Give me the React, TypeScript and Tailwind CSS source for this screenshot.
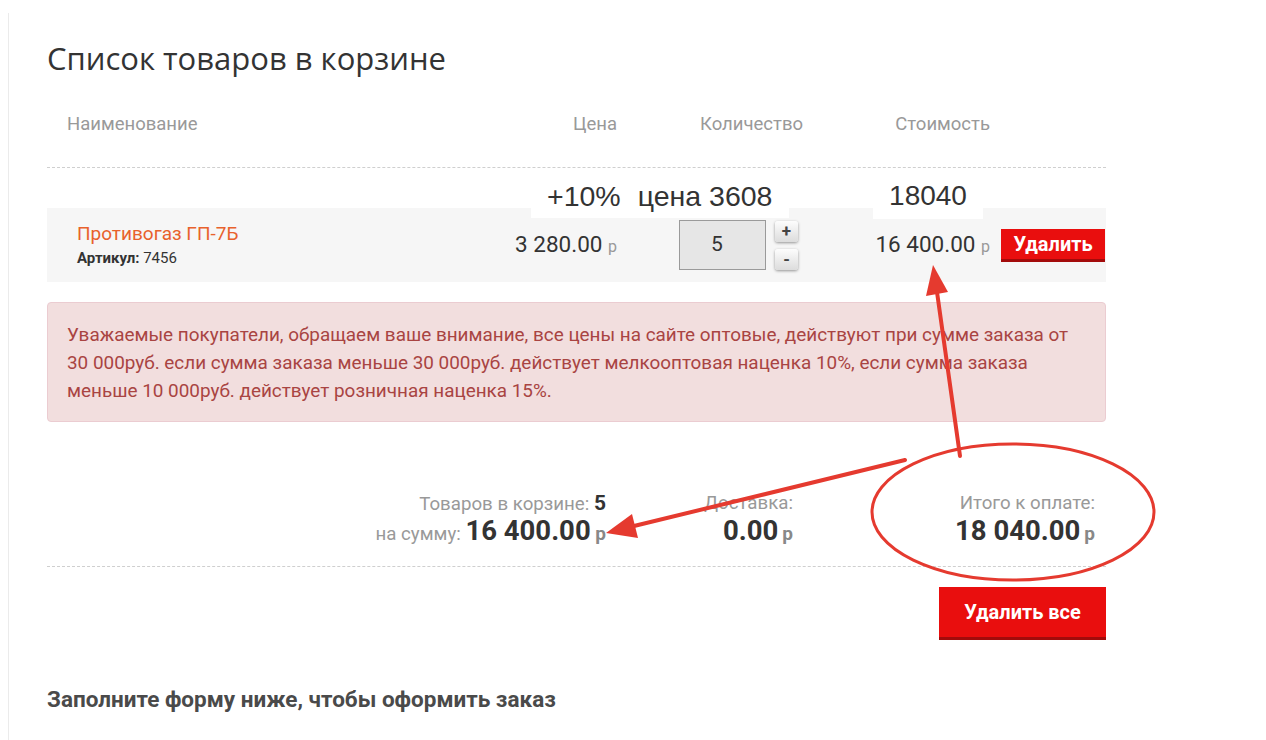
const roboto = { fontFamily: "Roboto, 'Liberation Sans', sans-serif" };

export default function App() {
  return (
    <div className="relative h-[740px] w-full overflow-hidden bg-white pl-2 pt-[13px]" style={roboto}>
      <div className="min-h-[760px] border-l border-[#ebebeb] pl-[38px]">
        <div className="w-[1059px] pt-[27px]">
          {/* Title */}
          <h1
            className="text-[31px] leading-[36px] text-[#333]"
            style={{ fontFamily: "'Open Sans', 'Noto Sans', sans-serif" }}
          >
            Список товаров в корзине
          </h1>

          {/* Table header */}
          <div className="mt-[36px] flex border-b border-dashed border-[#cfcfcf] pb-[31px] text-[18.5px] leading-[24px] text-[#999]">
            <div className="flex-1 pl-[20px]">Наименование</div>
            <div className="w-[160px] text-right">Цена</div>
            <div className="ml-[62px] w-[119px] pl-[21px]">Количество</div>
            <div className="w-[192px] text-right">Стоимость</div>
            <div className="ml-[11px] w-[104px]" />
            <div className="w-px" />
          </div>

          {/* Product row */}
          <div className="mt-[40px] flex h-[74px] items-center bg-[#f6f6f6]">
            <div className="flex-1 pl-[30px]">
              <div className="text-[19px] leading-[22px] text-[#e8612c]">Противогаз ГП-7Б</div>
              <div className="mt-[4px] text-[15px] leading-[18px] text-[#333]">
                <span className="font-bold">Артикул:</span> 7456
              </div>
            </div>
            <div className="w-[160px] text-right text-[22.5px] leading-[26px] text-[#333]">
              3 280.00 <span className="text-[16px] text-[#999]">р</span>
            </div>
            <div className="ml-[62px] flex w-[119px] items-center">
              <div className="flex h-[50px] w-[87px] items-center justify-center border border-[#9a9a9a] bg-[#e6e6e6] pr-[11px] text-[21px] text-[#333]">
                5
              </div>
              <div className="ml-[9px] flex flex-col gap-[7px]">
                <button className="flex h-[21px] w-[23px] items-center justify-center rounded-[3px] bg-gradient-to-b from-[#fdfdfd] to-[#dcdcdc] text-[17px] font-bold leading-none text-[#444] shadow-[0_1px_3px_rgba(0,0,0,0.4)]">
                  +
                </button>
                <button className="flex h-[21px] w-[23px] items-center justify-center rounded-[3px] bg-gradient-to-b from-[#fdfdfd] to-[#dcdcdc] text-[17px] font-bold leading-none text-[#444] shadow-[0_1px_3px_rgba(0,0,0,0.4)]">
                  -
                </button>
              </div>
            </div>
            <div className="w-[192px] text-right text-[22.5px] leading-[26px] text-[#333]">
              16 400.00 <span className="text-[16px] text-[#999]">р</span>
            </div>
            <button className="ml-[11px] h-[33px] w-[104px] border-b-[3px] border-[#a30b0b] bg-[#e90e0e] text-[20px] font-bold leading-none text-white">
              Удалить
            </button>
            <div className="w-px" />
          </div>

          {/* Notice */}
          <div className="mt-[20px] rounded-[4px] border border-[#ebccd1] bg-[#f2dede] pl-[19px] pr-[10px] pt-[18px] pb-[16px] text-[18.9px] leading-[28px] text-[#a94442]">
            Уважаемые покупатели, обращаем ваше внимание, все цены на сайте оптовые, действуют при сумме заказа от
            <br />
            30 000руб. если сумма заказа меньше 30 000руб. действует мелкооптовая наценка 10%, если сумма заказа
            <br />
            меньше 10 000руб. действует розничная наценка 15%.
          </div>

          {/* Totals */}
          <div className="mt-[68px] flex justify-end border-b border-dashed border-[#cfcfcf] pb-[20px] pr-[11px]">
            <div className="text-right">
              <div className="h-[26px] text-[18.7px] leading-[26px] text-[#999]">
                Товаров в корзине: <span className="text-[21px] font-bold text-[#333]">5</span>
              </div>
              <div className="h-[30px] text-[18.7px] leading-[30px] text-[#999]">
                на сумму: <span className="text-[27.5px] font-bold text-[#333]">16 400.00</span>{" "}
                <span className="text-[19px] font-bold text-[#888]">р</span>
              </div>
            </div>
            <div className="ml-[37px] w-[150px] text-right">
              <div className="h-[26px] text-[18.7px] leading-[26px] text-[#999]">Доставка:</div>
              <div className="h-[30px] leading-[30px]">
                <span className="text-[27.5px] font-bold text-[#333]">0.00</span>{" "}
                <span className="text-[19px] font-bold text-[#888]">р</span>
              </div>
            </div>
            <div className="ml-[102px] w-[200px] text-right">
              <div className="h-[26px] text-[18.7px] leading-[26px] text-[#999]">Итого к оплате:</div>
              <div className="h-[30px] leading-[30px]">
                <span className="text-[27.5px] font-bold text-[#333]">18 040.00</span>{" "}
                <span className="text-[19px] font-bold text-[#888]">р</span>
              </div>
            </div>
          </div>

          <div className="mt-[20px] flex justify-end">
            <button className="h-[53px] w-[167px] border-b-[3px] border-[#a30b0b] bg-[#e90e0e] text-[20px] font-bold text-white">
              Удалить все
            </button>
          </div>

          <h2 className="mt-[45px] text-[22.5px] font-bold leading-[28px] text-[#4a4a4a]">
            Заполните форму ниже, чтобы оформить заказ
          </h2>
        </div>
      </div>

      {/* Annotation labels over the row */}
      <div
        className="absolute left-[531px] top-[177px] flex h-[41px] w-[258px] items-start gap-[17px] bg-white pl-[16px] text-[28.5px] leading-[38px] text-[#333]"
        style={{ fontFamily: "'Liberation Sans', Arial, sans-serif" }}
      >
        <span>+10%</span>
        <span>цена 3608</span>
      </div>
      <div
        className="absolute left-[873px] top-[177px] h-[42px] w-[110px] bg-white text-center text-[28px] leading-[38px] text-[#333]"
        style={{ fontFamily: "'Liberation Sans', Arial, sans-serif" }}
      >
        18040
      </div>

      {/* Annotation arrows and ellipse */}
      <svg className="pointer-events-none absolute left-0 top-0" width="1266" height="740" viewBox="0 0 1266 740">
        <ellipse cx="1013" cy="512" rx="141" ry="68" fill="none" stroke="#e53a2f" strokeWidth="3" />
        <line x1="960" y1="456" x2="937" y2="292" stroke="#e53a2f" strokeWidth="4" strokeLinecap="round" />
        <polygon points="933,265 948,292 926,296" fill="#e53a2f" />
        <line x1="905" y1="460" x2="634" y2="526" stroke="#e53a2f" strokeWidth="4" strokeLinecap="round" />
        <polygon points="606,533 632,514 638,538" fill="#e53a2f" />
      </svg>
    </div>
  );
}
